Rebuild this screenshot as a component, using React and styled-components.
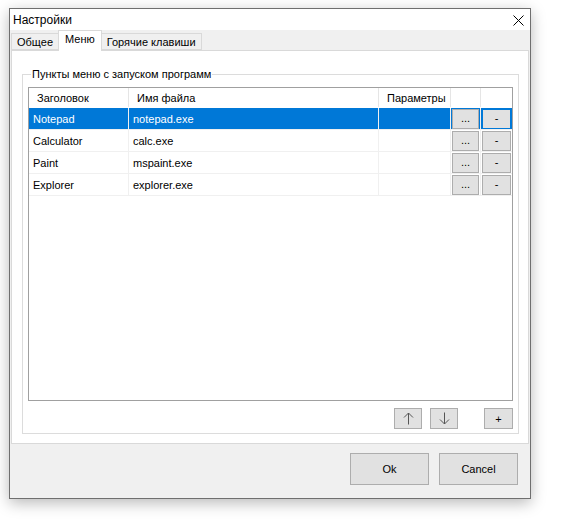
import React from "react";
import styled, { createGlobalStyle } from "styled-components";

const Global = createGlobalStyle`
  body {
    margin: 0;
    background: #ffffff;
    font-family: "Liberation Sans", Arial, sans-serif;
    font-size: 11px;
    color: #000;
  }
`;

const rows = [
    { title: "Notepad", file: "notepad.exe", params: "", selected: true },
    { title: "Calculator", file: "calc.exe", params: "" },
    { title: "Paint", file: "mspaint.exe", params: "" },
    { title: "Explorer", file: "explorer.exe", params: "" },
];

export default function App() {
    return (
        <Page>
            <Global />
            <Window>
                <TitleBar>
                    <Title>Настройки</Title>
                    <CloseIcon width="11" height="11" viewBox="0 0 11 11">
                        <path d="M0.5 0.5 L10.5 10.5 M10.5 0.5 L0.5 10.5" stroke="#000" strokeWidth="1" fill="none" />
                    </CloseIcon>
                </TitleBar>

                <Tabs>
                    <Tab>Общее</Tab>
                    <Tab active>Меню</Tab>
                    <Tab>Горячие клавиши</Tab>
                </Tabs>

                <Panel>
                    <Group>
                        <GroupLabel>Пункты меню с запуском программ</GroupLabel>
                        <List>
                            <HeaderRow>
                                <HeadCell>Заголовок</HeadCell>
                                <HeadCell>Имя файла</HeadCell>
                                <HeadCell>Параметры</HeadCell>
                                <HeadCell />
                                <HeadCell last />
                            </HeaderRow>
                            {rows.map((r) => (
                                <Row key={r.title} selected={r.selected}>
                                    <Cell>{r.title}</Cell>
                                    <Cell>{r.file}</Cell>
                                    <Cell>{r.params}</Cell>
                                    <BtnCell>
                                        <SmallButton>...</SmallButton>
                                    </BtnCell>
                                    <BtnCell last>
                                        <SmallButton focused={r.selected}>-</SmallButton>
                                    </BtnCell>
                                </Row>
                            ))}
                        </List>
                        <ListTools>
                            <ToolButton>
                                <svg width="11" height="13" viewBox="0 0 11 13">
                                    <path d="M5.5 1 V12.5 M1 5.5 L5.5 1 L10 5.5" stroke="#555" strokeWidth="1" fill="none" />
                                </svg>
                            </ToolButton>
                            <ToolButton>
                                <svg width="11" height="13" viewBox="0 0 11 13">
                                    <path d="M5.5 0.5 V12 M1 7.5 L5.5 12 L10 7.5" stroke="#555" strokeWidth="1" fill="none" />
                                </svg>
                            </ToolButton>
                            <Spacer />
                            <ToolButton wide>+</ToolButton>
                        </ListTools>
                    </Group>
                </Panel>

                <Footer>
                    <DialogButton>Ok</DialogButton>
                    <DialogButton>Cancel</DialogButton>
                </Footer>
            </Window>
        </Page>
    );
}

const Page = styled.div`
    padding: 8px 0 0 9px;
    height: 519px;
`;

const Window = styled.div`
    width: 520px;
    height: 489px;
    border: 1px solid #6f6f6f;
    background: #f0f0f0;
    box-shadow: 0 4px 14px rgba(0, 0, 0, 0.28);
    display: flex;
    flex-direction: column;
`;

const TitleBar = styled.div`
    height: 21px;
    background: #ffffff;
    display: flex;
    align-items: center;
    justify-content: space-between;
    padding: 0 6px 0 3px;
`;

const Title = styled.span`
    font-size: 12px;
    padding-top: 1px;
`;

const CloseIcon = styled.svg`
    display: block;
    margin-top: 1px;
`;

const Tabs = styled.div`
    display: flex;
    align-items: flex-end;
    height: 20px;
    padding-left: 1px;
`;

const Tab = styled.div`
    position: relative;
    z-index: ${(p) => (p.active ? 1 : 0)};
    box-sizing: border-box;
    height: ${(p) => (p.active ? "21px" : "17px")};
    margin: ${(p) => (p.active ? "0 -1px -1px -1px" : "0")};
    padding: ${(p) => (p.active ? "3px 6px 0 6px" : "1px 5px 0 5px")};
    background: ${(p) => (p.active ? "#ffffff" : "#f0f0f0")};
    border: 1px solid #d9d9d9;
    border-bottom: ${(p) => (p.active ? "none" : "1px solid #d9d9d9")};
    display: flex;
    align-items: ${(p) => (p.active ? "flex-start" : "center")};
    font-size: 11px;
    line-height: 1;
`;

const Panel = styled.div`
    margin: 0 1px;
    height: 394px;
    box-sizing: border-box;
    background: #ffffff;
    border: 1px solid #d9d9d9;
    padding: 23px 10px 9px 10px;
    display: flex;
`;

const Group = styled.div`
    position: relative;
    flex: 1;
    border: 1px solid #dcdcdc;
    padding: 12px 5px 0 5px;
    display: flex;
    flex-direction: column;
`;

const GroupLabel = styled.span`
    position: absolute;
    top: -8px;
    left: 8px;
    padding: 0 1px;
    background: #ffffff;
    font-size: 11px;
    line-height: 14px;
`;

const List = styled.div`
    height: 314px;
    box-sizing: border-box;
    border: 1px solid #a0a0a0;
    background: #ffffff;
`;

const columns = "100px 250px 72px 30px 31px";

const HeaderRow = styled.div`
    display: grid;
    grid-template-columns: ${columns};
    height: 19px;
    border-bottom: 1px solid #ffffff;
`;

const HeadCell = styled.div`
    border-right: ${(p) => (p.last ? "none" : "1px solid #e5e5e5")};
    padding-left: 8px;
    display: flex;
    align-items: center;
    font-size: 11px;
`;

const Row = styled.div`
    display: grid;
    grid-template-columns: ${columns};
    height: 22px;
    box-sizing: border-box;
    border-bottom: 1px solid #f0f0f0;
    background: ${(p) => (p.selected ? "#0078d7" : "#ffffff")};
    color: ${(p) => (p.selected ? "#ffffff" : "#000000")};
`;

const Cell = styled.div`
    border-right: 1px solid #f0f0f0;
    padding-left: 4px;
    display: flex;
    align-items: center;
    font-size: 11px;
    white-space: nowrap;
    overflow: hidden;
`;

const BtnCell = styled.div`
    border-right: ${(p) => (p.last ? "none" : "1px solid #f0f0f0")};
    padding: 1px 1px 0 1px;
    display: flex;
    align-items: flex-start;
`;

const SmallButton = styled.button`
    flex: 1;
    height: 20px;
    margin: 0;
    padding: 0 0 4px 0;
    background: #e1e1e1;
    border: 1px solid ${(p) => (p.focused ? "#0078d7" : "#adadad")};
    font-family: "Liberation Sans", Arial, sans-serif;
    font-size: 11px;
    color: #000;
    display: flex;
    align-items: flex-end;
    justify-content: center;
    box-sizing: border-box;
`;

const ListTools = styled.div`
    display: flex;
    gap: 8px;
    padding: 7px 0 0 0;
    justify-content: flex-end;
`;

const Spacer = styled.div`
    width: 10px;
`;

const ToolButton = styled.button`
    width: ${(p) => (p.wide ? "29px" : "28px")};
    height: 21px;
    padding: 0;
    margin: 0;
    background: #e1e1e1;
    border: 1px solid #adadad;
    font-family: "Liberation Sans", Arial, sans-serif;
    font-size: 11px;
    color: #000;
    display: flex;
    align-items: center;
    justify-content: center;
    box-sizing: border-box;
`;

const Footer = styled.div`
    flex: 1;
    display: flex;
    justify-content: flex-end;
    align-items: flex-start;
    gap: 10px;
    padding: 9px 12px 0 0;
`;

const DialogButton = styled.button`
    width: 79px;
    height: 32px;
    margin: 0;
    padding: 0;
    background: #e1e1e1;
    border: 1px solid #adadad;
    font-family: "Liberation Sans", Arial, sans-serif;
    font-size: 11px;
    color: #000;
    box-sizing: border-box;
`;
